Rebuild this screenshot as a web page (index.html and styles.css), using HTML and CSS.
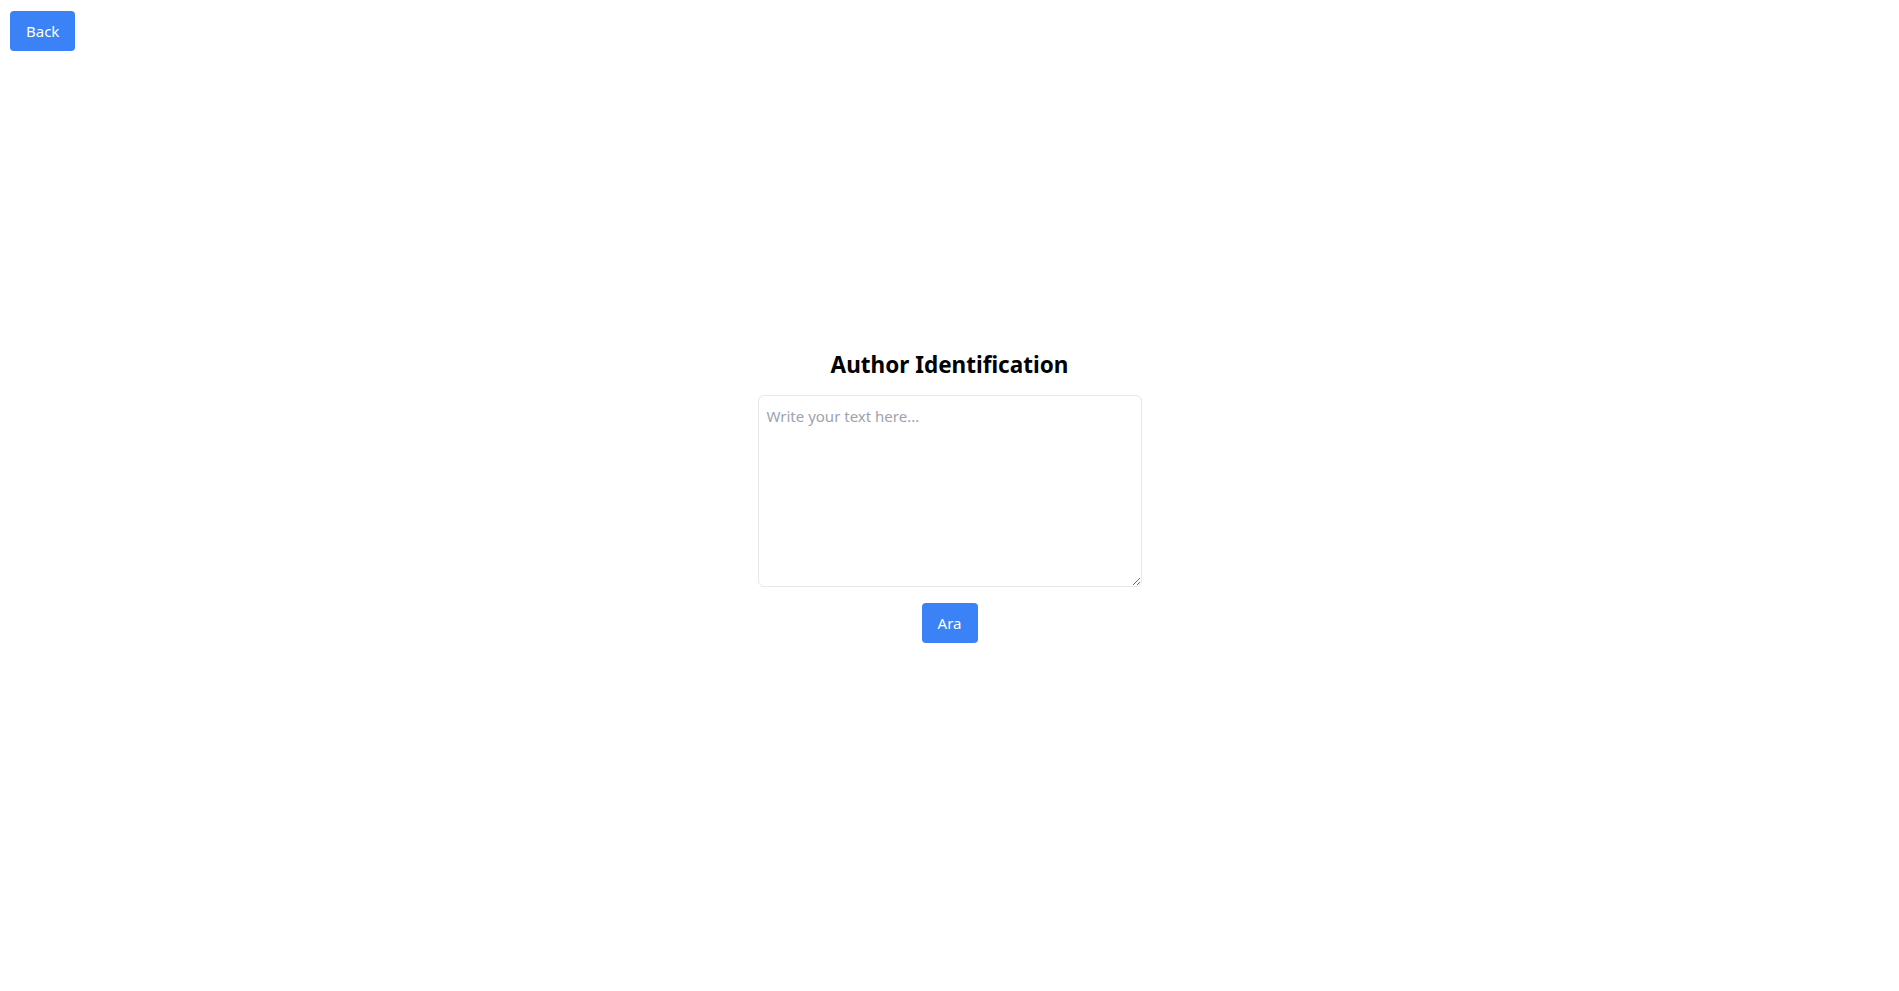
FILE: index.html
```html
<!DOCTYPE html>
<html lang="en">
<head>
<meta charset="utf-8">
<title>Author Identification</title>
<link rel="stylesheet" href="styles.css">
</head>
<body>
<button class="btn back-btn" type="button">Back</button>
<main class="page">
  <h1 class="title">Author Identification</h1>
  <textarea class="text-input" placeholder="Write your text here..."></textarea>
  <button class="btn search-btn" type="button">Ara</button>
</main>
</body>
</html>
```
FILE: styles.css
```css
* { box-sizing: border-box; }
html, body { margin: 0; padding: 0; background: #ffffff; }
body {
  font-family: "Noto Sans", "Open Sans", "Liberation Sans", sans-serif;
  color: #000;
}
.page {
  min-height: 100vh;
  display: flex;
  flex-direction: column;
  align-items: center;
  justify-content: center;
  padding-bottom: 1px;
}
.title {
  margin: 0 0 14px;
  padding-top: 2px;
  font-size: 22.5px;
  line-height: 32px;
  font-weight: 700;
}
.text-input {
  width: 384px;
  height: 192px;
  padding: 8px;
  border: 1px solid #e5e7eb;
  border-radius: 6px;
  font-family: inherit;
  font-size: 15px;
  line-height: 24px;
  color: #111827;
  resize: both;
  outline: none;
}
.text-input::placeholder { color: #9ca3af; }
.btn {
  background: #3b82f6;
  color: #ffffff;
  border: none;
  border-radius: 4px;
  height: 40px;
  padding: 0 16px;
  font-family: inherit;
  font-size: 15px;
  cursor: pointer;
}
.back-btn {
  position: absolute;
  top: 11px;
  left: 10px;
  width: 65px;
}
.search-btn {
  margin-top: 16px;
  width: 56px;
  padding: 0;
}
```
